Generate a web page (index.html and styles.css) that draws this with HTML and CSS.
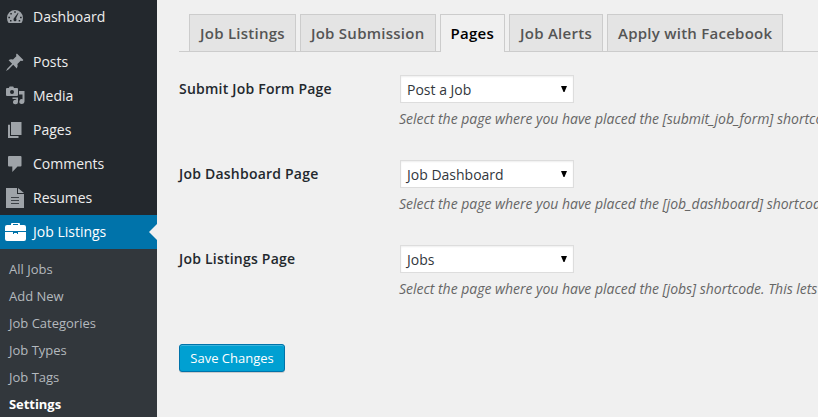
FILE: index.html
```
<!DOCTYPE html>
<html lang="en">
<head>
<meta charset="utf-8">
<title>Job Listings Settings</title>
<link rel="stylesheet" href="styles.css">
</head>
<body>
<div class="layout">
  <nav class="sidebar">
    <ul class="menu">
      <li class="menu-item first"><svg class="icon" viewBox="0 0 20 20"><path fill-rule="evenodd" d="M3.600 16Q2 13.800 2 11a8 8 0 0 1 16 0q0 2.800-1.600 5ZM9.200 4.200v1.600h1.600V4.200ZM5.300 6v1.500h1.500V6ZM3.300 9.800v1.500H5V9.800ZM15 9.800v1.500h1.700V9.800ZM5 13v1.500h1.500V13ZM13.700 13v1.500h1.500V13ZM13 5.800 9.300 10.800Q8.500 11.500 8.500 12.800a1.500 1.500 0 0 0 3 0q0-.8-.4-1.500L13.400 6.300Z"/></svg><span>Dashboard</span></li>
      <li class="menu-item"><svg class="icon" viewBox="0 0 20 20"><path d="m11.900 1.600 6.500 6.500-1 .9-1.800-.2-3.200 3.300q.9 2.500-.6 4.300l-3.600-3.600-4.700 4.700-2.500 1.500 1.400-2.500 4.700-4.800-3.500-3.500Q5.500 6.700 8 7.600l3.300-3.300-.2-1.800Z"/></svg><span>Posts</span></li>
      <li class="menu-item"><svg class="icon" viewBox="0 0 20 20"><path fill-rule="evenodd" d="M2 2h1.800l.8-1.500h3.600L9 2h3q1 0 1 1v6q0 1-1 1H2q-1 0-1-1V3q0-1 1-1Zm5 2a2 2 0 1 0 0 4 2 2 0 0 0 0-4ZM14 5h5.500V15.500a2.600 2.400 0 1 1-2-2.300V8.500H14ZM7.500 11.500H13V16a2.500 2.300 0 1 1-1.800-2.200v-.8H7.500Z"/></svg><span>Media</span></li>
      <li class="menu-item"><svg class="icon" viewBox="0 0 20 20"><path d="M6 2h10.500v13H6ZM3 4.700h2V16h8.500v2H3Z"/></svg><span>Pages</span></li>
      <li class="menu-item"><svg class="icon" viewBox="0 0 20 20"><path d="M4 2h11.500q1 0 1 1v8.500q0 1-1 1h-3L7.300 18v-5.500H4q-1 0-1-1V3q0-1 1-1Z"/></svg><span>Comments</span></li>
      <li class="menu-item"><svg class="icon" viewBox="0 0 20 20"><path d="M1 0h11v6h7v14H1ZM13 0l6 5h-6Z"/><path class="lines" d="M6 9h8v1H6ZM6 12h8v1H6ZM6 15h8v1H6Z"/></svg><span>Resumes</span></li>
      <li class="menu-item current"><svg class="icon brief" viewBox="0 0 21 20"><path fill-rule="evenodd" d="M6 3V2q0-1 1-1h7q1 0 1 1v1H19q2 0 2 2v4H0V5q0-2 2-2Zm2 0h5V2H8ZM0 10h21v7q0 2-2 2H2q-2 0-2-2ZM8 10v2h1v-1h3v1h1v-2Z"/></svg><span>Job Listings</span></li>
    </ul>
    <ul class="submenu">
      <li>All Jobs</li><li>Add New</li><li>Job Categories</li><li>Job Types</li><li>Job Tags</li><li class="active">Settings</li>
    </ul>
  </nav>
  <main class="content">
    <div class="tabs">
      <a class="tab">Job Listings</a><a class="tab">Job Submission</a><a class="tab selected">Pages</a><a class="tab">Job Alerts</a><a class="tab">Apply with Facebook</a>
    </div>
    <div class="rows">
      <div class="row"><div class="label">Submit Job Form Page</div><div class="field"><div class="select"><span>Post a Job</span><svg class="arrow" viewBox="0 0 6 6"><path d="M0 0h6L3.500 6h-1Z"/></svg></div><p class="hint">Select the page where you have placed the [submit_job_form] shortcode.</p></div></div>
      <div class="row"><div class="label">Job Dashboard Page</div><div class="field"><div class="select"><span>Job Dashboard</span><svg class="arrow" viewBox="0 0 6 6"><path d="M0 0h6L3.500 6h-1Z"/></svg></div><p class="hint">Select the page where you have placed the [job_dashboard] shortcode.</p></div></div>
      <div class="row"><div class="label">Job Listings Page</div><div class="field"><div class="select"><span>Jobs</span><svg class="arrow" viewBox="0 0 6 6"><path d="M0 0h6L3.500 6h-1Z"/></svg></div><p class="hint">Select the page where you have placed the [jobs] shortcode. This lets</p></div></div>
    </div>
    <button class="save">Save Changes</button>
  </main>
</div>
</body>
</html>
```
FILE: styles.css
```
* { box-sizing: border-box; }
body { margin: 0; background: #f0f0f0; font-family: "Open Sans", sans-serif; overflow: hidden; }
ul { list-style: none; margin: 0; padding: 0; }
.layout { display: flex; height: 417px; }
.sidebar { flex: 0 0 157px; background: #23282d; display: flex; flex-direction: column; }
.menu-item { display: flex; align-items: center; gap: 8px; height: 34px; padding-left: 5px; color: #eee; font-size: 14px; line-height: 18px; white-space: nowrap; }
.first { margin-bottom: 11px; }
.icon { width: 20px; height: 20px; flex: none; fill: #9ea3a8; }
.lines { fill: #3c4146; }
.current { background: #0073aa; color: #fff; position: relative; }
.current .icon { fill: #fff; width: 21px; }
.current { gap: 7px; }
.current::after { content: ""; position: absolute; right: 0; top: 9px; border: 8px solid transparent; border-left: 0; border-right-color: #f0f0f0; }
.submenu { flex: 1; background: #32373c; padding: 7px 0 0 9px; }
.submenu li { height: 27px; line-height: 27px; font-size: 13px; color: #b4b9be; }
.submenu .active { color: #fff; font-weight: 700; letter-spacing: -.05px; }
.content { flex: 1; min-width: 0; padding: 14px 0 0 22px; overflow: hidden; }
.tabs { display: flex; gap: 4px; padding-left: 10px; border-bottom: 1px solid #ccc; height: 38px; }
.tab { height: 37px; border: 1px solid #ccc; border-bottom: 0; background: #e4e4e4; color: #555; padding: 6px 10px; font-size: 15px; line-height: 24px; font-weight: 600; letter-spacing: .26px; white-space: nowrap; }
.selected { background: #f0f0f0; color: #000; height: 38px; }
.rows { padding-top: 23px; }
.row { display: flex; height: 85px; }
.label { flex: 0 0 220px; padding-top: 5px; font-size: 14px; line-height: 18px; font-weight: 600; letter-spacing: .22px; color: #23282d; }
.field { flex: 1; min-width: 0; }
.select { display: flex; align-items: center; justify-content: space-between; margin-left: 1px; width: 174px; height: 28px; border: 1px solid #ddd; background: #fff; box-shadow: inset 0 1px 2px rgba(0,0,0,.07); padding: 1px 6px 0; font-size: 14px; color: #32373c; }
.arrow { width: 6px; height: 6px; margin-bottom: 2px; }
.hint { margin: 5px 0 0; font-size: 14px; line-height: 21px; font-style: italic; letter-spacing: -.02px; color: #666; white-space: nowrap; }
.save { display: block; margin-top: 14px; width: 106px; height: 28px; padding: 0; border: 1px solid #0073aa; border-radius: 3px; background: #00a0d2; color: #fff; font: 13px/26px "Open Sans", sans-serif; box-shadow: inset 0 1px 0 rgba(120,200,230,.5), 0 1px 0 rgba(0,0,0,.15); }
```
